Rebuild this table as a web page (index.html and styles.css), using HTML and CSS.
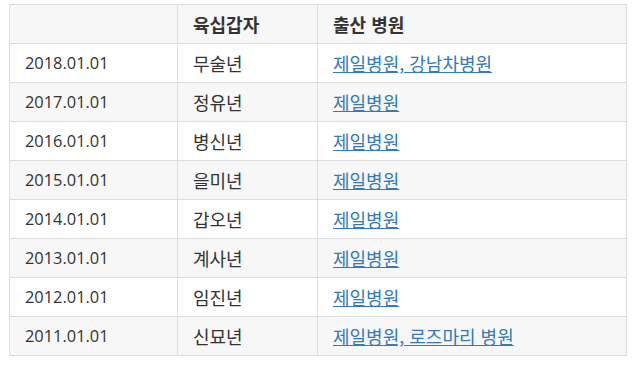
FILE: index.html
```html
<!DOCTYPE html>
<html lang="ko">
<head>
<meta charset="utf-8">
<link rel="stylesheet" href="styles.css">
</head>
<body>
<table class="tbl">
  <thead>
    <tr><th></th><th class="ko">육십갑자</th><th class="ko">출산 병원</th></tr>
  </thead>
  <tbody>
    <tr><td>2018.01.01</td><td class="ko">무술년</td><td class="ko"><a href="#">제일병원, 강남차병원</a></td></tr>
    <tr><td>2017.01.01</td><td class="ko">정유년</td><td class="ko"><a href="#">제일병원</a></td></tr>
    <tr><td>2016.01.01</td><td class="ko">병신년</td><td class="ko"><a href="#">제일병원</a></td></tr>
    <tr><td>2015.01.01</td><td class="ko">을미년</td><td class="ko"><a href="#">제일병원</a></td></tr>
    <tr><td>2014.01.01</td><td class="ko">갑오년</td><td class="ko"><a href="#">제일병원</a></td></tr>
    <tr><td>2013.01.01</td><td class="ko">계사년</td><td class="ko"><a href="#">제일병원</a></td></tr>
    <tr><td>2012.01.01</td><td class="ko">임진년</td><td class="ko"><a href="#">제일병원</a></td></tr>
    <tr><td>2011.01.01</td><td class="ko">신묘년</td><td class="ko"><a href="#">제일병원, 로즈마리 병원</a></td></tr>
  </tbody>
</table>
</body>
</html>
```
FILE: styles.css
```css
html, body { background: #fff; }
body {
  margin: 4px 8px 0 9px;
  font-family: "Open Sans", "Noto Sans CJK KR", sans-serif;
  font-size: 16.4px;
  color: #333;
}
.tbl {
  width: 618px;
  border-collapse: collapse;
  border: 1px solid #ddd;
}
.tbl th, .tbl td {
  border: 1px solid #ddd;
  height: 39px;
  padding: 0 15px;
  text-align: left;
  line-height: 22px;
  box-sizing: border-box;
}
.tbl .ko {
  font-family: "Noto Sans CJK KR", "Open Sans", sans-serif;
  font-size: 18px;
}
.tbl th { font-weight: bold; background: #f7f7f7; }
.tbl th:nth-child(1), .tbl td:nth-child(1) { width: 168px; }
.tbl th:nth-child(2), .tbl td:nth-child(2) { width: 140px; }
.tbl tbody tr:nth-child(even) { background: #f7f7f7; }
.tbl a { color: #337ab7; text-decoration: underline; }
```
